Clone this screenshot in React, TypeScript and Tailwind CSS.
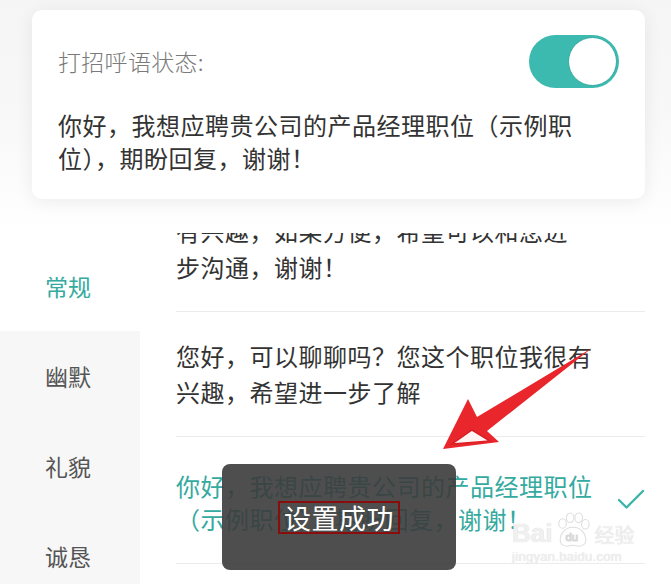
import { Check } from 'lucide-react';

const TABS = [
  { label: '常规', active: true },
  { label: '幽默', active: false },
  { label: '礼貌', active: false },
  { label: '诚恳', active: false },
];

const GREETINGS = [
  { lines: ['您好，我对贵公司的这个职位很', '有兴趣，如果方便，希望可以和您进一', '步沟通，谢谢！'], selected: false },
  { lines: ['您好，可以聊聊吗？您这个职位我很有', '兴趣，希望进一步了解'], selected: false },
  { lines: ['你好，我想应聘贵公司的产品经理职位', '（示例职位），期盼回复，谢谢！'], selected: true },
];

function Toggle() {
  return (
    <div className="flex h-[53px] w-[90px] items-center justify-end rounded-full bg-[#3dbab0] p-[2px]">
      <div className="h-[49px] w-[49px] rounded-full border border-[#33aaa0] bg-white" />
    </div>
  );
}

function Watermark() {
  return (
    <div className="pointer-events-none absolute left-[512px] top-[512px] flex flex-col text-[#f0f0f0] [text-shadow:0_0_1px_#d4d4d4]">
      <div className="flex items-end gap-[2px]">
        <span className="font-['Liberation_Sans',sans-serif] text-[26px] font-bold leading-[27px]">Bai</span>
        <svg width="38" height="38" viewBox="0 0 40 40" className="-mb-[3px]">
          <g fill="none" stroke="#dedede" strokeWidth="1.1">
            <ellipse cx="9" cy="12" rx="4" ry="5" />
            <ellipse cx="17" cy="6" rx="4" ry="5" />
            <ellipse cx="26" cy="6" rx="4" ry="5" />
            <ellipse cx="33" cy="13" rx="4" ry="5" />
            <path d="M20 16 C10 16 5 26 7 32 C9 38 16 36 20 35 C24 36 31 38 33 32 C35 26 30 16 20 16 Z" />
          </g>
          <text x="12" y="31" fontSize="12" fill="#eeeeee" stroke="#d4d4d4" strokeWidth="0.5" fontFamily="Liberation Sans">du</text>
        </svg>
        <span className="text-[20px] leading-[25px]">经验</span>
      </div>
      <span className="mt-[2px] font-['Liberation_Sans',sans-serif] text-[13px] leading-[16px] tracking-[0.3px]">jingyan.baidu.com</span>
    </div>
  );
}

function Arrow() {
  return (
    <svg className="pointer-events-none absolute left-0 top-0" width="671" height="584">
      <polygon points="592,348 477,417 468,399 443,449 499,442 487,431" fill="#e8262b" />
      <polygon points="452,444 472,430 490,441" fill="#fff5f5" stroke="#d91f24" strokeWidth="1.5" />
    </svg>
  );
}

export default function App() {
  return (
    <div className="relative h-[584px] w-[671px] overflow-hidden bg-white font-['Noto_Sans_CJK_SC','Noto_Sans',sans-serif] text-[#333]">
      <header className="h-[233px] bg-gradient-to-b from-[#f5f5f5] via-[#f8f8f8] to-white px-[32px] pt-[10px]">
        <div className="w-[613px] rounded-[10px] bg-white px-[26px] pb-[25px] pt-[25px] shadow-[0_3px_18px_rgba(0,0,0,0.07)]">
          <div className="flex items-center justify-between">
            <span className="text-[23px] font-light tracking-[0.3px] text-[#7a7a7a]">打招呼语状态:</span>
            <Toggle />
          </div>
          <p className="mt-[20px] text-[24px] leading-[33px] tracking-[0.5px]">
            你好，我想应聘贵公司的产品经理职位（示例职
            <br />
            位），期盼回复，谢谢！
          </p>
        </div>
      </header>

      <div className="flex h-[351px]">
        <nav className="flex w-[140px] shrink-0 flex-col bg-[#f7f7f7]">
          {TABS.map((tab) => (
            <div
              key={tab.label}
              className={
                tab.active
                  ? 'flex h-[98px] shrink-0 items-center justify-center bg-white pr-[4px] pt-[8px] text-[23px] text-[#35aaa0]'
                  : 'flex h-[90px] shrink-0 items-center justify-center pr-[4px] text-[23px] text-[#555]'
              }
            >
              {tab.label}
            </div>
          ))}
        </nav>

        <div className="flex-1 overflow-hidden pl-[36px] pr-[26px]">
          <div className="-mt-[82px]">
            {GREETINGS.map((g, i) => (
              <div key={i} className="flex items-center justify-between border-b border-[#ebebeb] py-[26px]">
                <p
                  className={
                    g.selected
                      ? 'pb-[2px] pt-[6px] text-[24px] leading-[33px] tracking-[0.5px] text-[#35aaa0]'
                      : 'text-[24px] leading-[36px] tracking-[0.5px] text-[#333]'
                  }
                >
                  {g.lines.map((line) => (
                    <span key={line} className="block whitespace-nowrap">
                      {line}
                    </span>
                  ))}
                </p>
                {g.selected && <Check className="-mr-[4px] h-[36px] w-[36px] text-[#3db5ab]" strokeWidth={1.6} />}
              </div>
            ))}
          </div>
        </div>
      </div>

      <Arrow />
      <Watermark />

      <div className="absolute left-[222px] top-[464px] flex h-[106px] w-[234px] items-center justify-center rounded-[8px] bg-[#3b3b3b]/90">
        <span className="border-2 border-[#8a0d0d] px-[4px] text-[27px] leading-[29px] tracking-[0.5px] text-white">设置成功</span>
      </div>
    </div>
  );
}
